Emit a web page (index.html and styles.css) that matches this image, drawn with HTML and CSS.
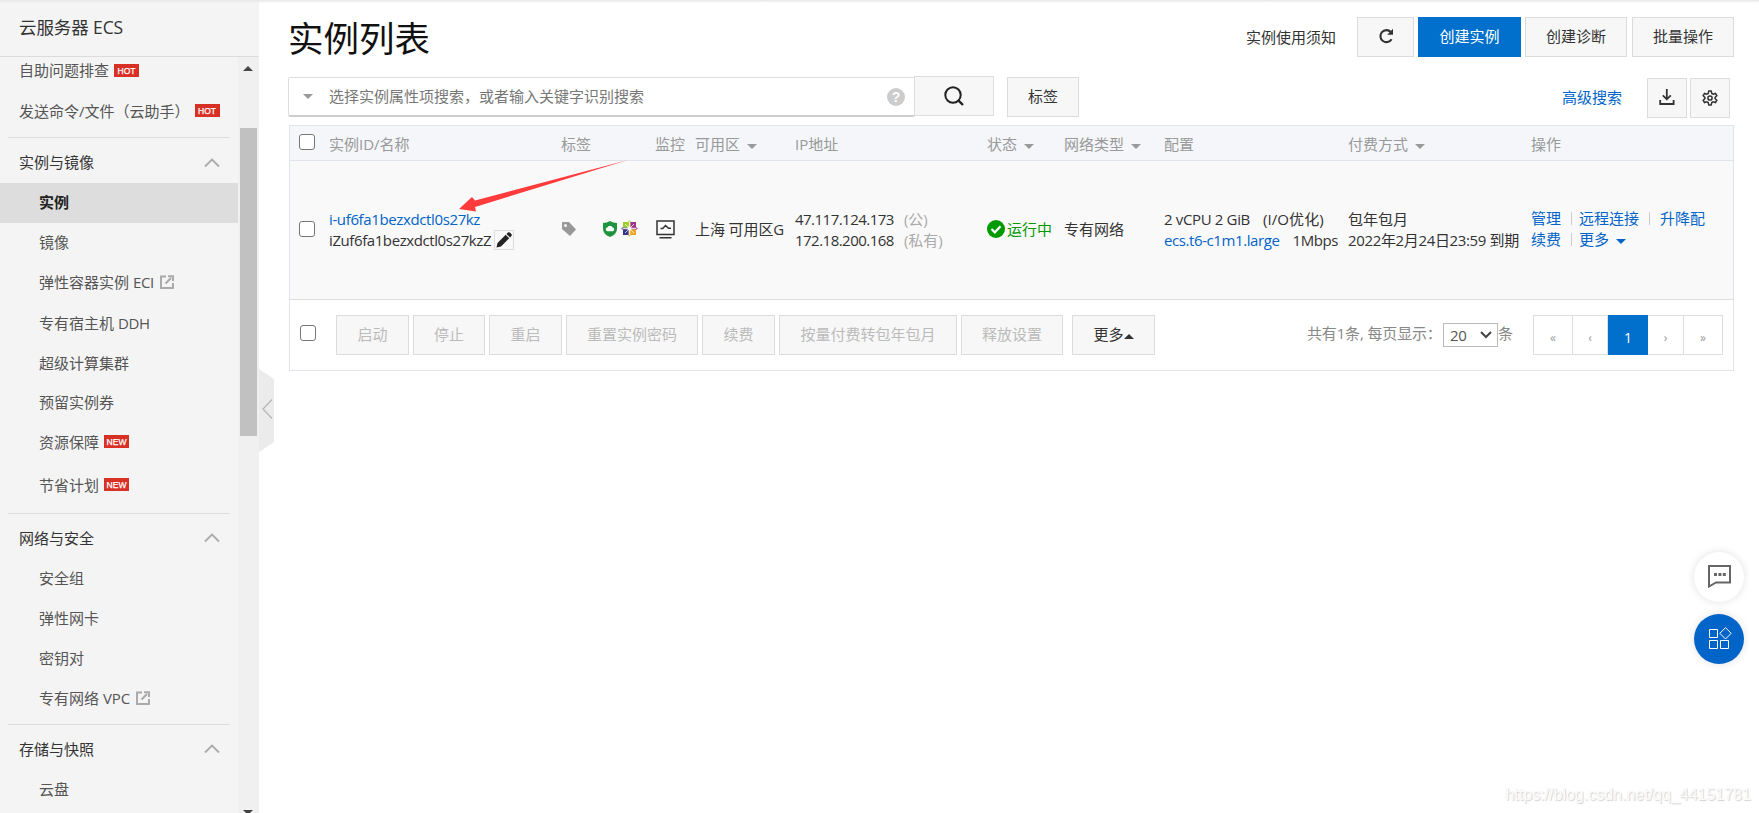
FILE: index.html
```html
<!DOCTYPE html>
<html lang="zh-CN">
<head>
<meta charset="utf-8">
<title>实例列表</title>
<link rel="stylesheet" href="styles.css">
</head>
<body>
<div class="app">
  <aside class="sidebar">
    <div class="product">云服务器 ECS</div>
    <div class="side-body">
      <nav class="nav">
        <a class="top first">自助问题排查<span class="badge">HOT</span></a>
        <a class="top second">发送命令/文件（云助手）<span class="badge wide">HOT</span></a>
        <hr class="rule">
        <div class="group tall">实例与镜像<svg class="chev" viewBox="0 0 16 10"><path d="M1 8.500l7-7 7 7"/></svg></div>
        <a class="item active">实例</a>
        <a class="item">镜像</a>
        <a class="item">弹性容器实例 <span class="latin">ECI</span><svg class="ext" viewBox="0 0 14 14"><path d="M6 1.500H1v11.500h12V8"/><path d="M5.500 8.500L11 3M8 1.200h5V6"/></svg></a>
        <a class="item level">专有宿主机 <span class="latin">DDH</span></a>
        <a class="item level">超级计算集群</a>
        <a class="item">预留实例券</a>
        <a class="item">资源保障<span class="badge">NEW</span></a>
        <a class="item level saving">节省计划<span class="badge">NEW</span></a>
        <hr class="rule">
        <div class="group">网络与安全<svg class="chev" viewBox="0 0 16 10"><path d="M1 8.500l7-7 7 7"/></svg></div>
        <a class="item level">安全组</a>
        <a class="item level">弹性网卡</a>
        <a class="item level">密钥对</a>
        <a class="item level last">专有网络 VPC<svg class="ext" viewBox="0 0 14 14"><path d="M6 1.500H1v11.500h12V8"/><path d="M5.500 8.500L11 3M8 1.200h5V6"/></svg></a>
        <hr class="rule">
        <div class="group">存储与快照<svg class="chev" viewBox="0 0 16 10"><path d="M1 8.500l7-7 7 7"/></svg></div>
        <a class="item level">云盘</a>
      </nav>
      <div class="scrollbar"><i class="up"></i><i class="thumb"></i><i class="down"></i></div>
    </div>
    <svg class="collapse" viewBox="0 0 15 83"><path class="tab" d="M0 0l15 10v63L0 83z"/><path class="arrow" d="M13 30.500l-9 9.500 9 9.500"/></svg>
  </aside>

  <main class="main">
    <header class="head">
      <h1>实例列表</h1>
      <div class="head-actions">
        <span class="notice">实例使用须知</span>
        <button class="btn refresh"><svg width="16" height="16" viewBox="0 0 16 16"><path d="M12.800 4A6 6 0 1 0 13.600 11.200" fill="none" stroke="#333" stroke-width="2.100"/><path d="M15 .8v6H9.200z" fill="#333"/></svg></button>
        <button class="btn primary">创建实例</button>
        <button class="btn diag">创建诊断</button>
        <button class="btn batch">批量操作</button>
      </div>
    </header>

    <div class="search">
      <div class="search-box"><i class="caret"></i><span class="placeholder">选择实例属性项搜索，或者输入关键字识别搜索</span><span class="help">?</span></div>
      <button class="btn go"><svg width="20" height="20" viewBox="0 0 20 20" fill="none" stroke="#222" stroke-width="2"><circle cx="9" cy="9" r="7.700"/><path d="M14.300 14.300l4.700 4.700" stroke-width="2.400"/></svg></button>
      <button class="btn tagbtn">标签</button>
      <a class="advanced">高级搜索</a>
      <button class="btn square"><svg width="16" height="16" viewBox="0 0 16 16" fill="none" stroke="#333" stroke-width="1.800"><path d="M7.800 0v10M3.800 6.300l4 4 4-4M1.200 11v4h13.400v-4"/></svg></button>
      <button class="btn square gear"><svg width="16" height="16" viewBox="0 0 16 16" fill="none" stroke="#333" stroke-width="1.500"><path d="M6.800 1h2.400l.6 2.400 1.400.8 2.300-.7 1.300 2.200L13.100 7.400v1.200l1.700 1.700-1.300 2.200-2.300-.7-1.400.8-.6 2.400H6.800l-.6-2.400-1.400-.8-2.300.7-1.300-2.200 1.700-1.700V7.400L1.200 5.700l1.300-2.200 2.300.7 1.400-.8z"/><circle cx="8" cy="8" r="2.100"/></svg></button>
    </div>

    <section class="table">
      <div class="row thead">
        <div><i class="check"></i></div><div>实例ID/名称</div><div>标签</div><div></div><div>监控</div>
        <div>可用区<i class="caret sort"></i></div><div>IP地址</div><div>状态<i class="caret sort"></i></div>
        <div>网络类型<i class="caret sort"></i></div><div>配置</div><div>付费方式<i class="caret sort"></i></div><div>操作</div>
      </div>
      <div class="row data">
        <div><i class="check"></i></div>
        <div class="lines name">
          <a class="link id">i-uf6fa1bezxdctl0s27kz</a>
          <div class="alias"><span>iZuf6fa1bezxdctl0s27kzZ</span><i class="edit"><svg width="16" height="16" viewBox="0 0 16 16" fill="#222"><path d="M.5 15.500l1-4.500L9.700 2.800l3.500 3.500L5 14.500zM10.500 2l1.400-1.400q1-.9 2 0l1.500 1.500q.9 1 0 2L14 5.500z"/></svg></i></div>
        </div>
        <div><svg width="16" height="16" viewBox="0 0 16 16"><path d="M1.500 1H8l7 7.500L9 15 1 8V1.500z" fill="#999"/><circle cx="4.500" cy="4.500" r="1.500" fill="#fafafa"/></svg></div>
        <div class="marks">
          <svg width="14" height="16" viewBox="0 0 14 16"><path d="M7 0q3 2 7 2v6q0 5-7 8-7-3-7-8V2q4 0 7-2z" fill="#1e9440"/><path d="M4.200 10.200a1.900 1.900 0 0 1 .1-3.700 2.900 2.900 0 0 1 5.400 0 1.900 1.900 0 0 1 .1 3.700z" fill="#fff"/></svg>
          <svg class="flower" width="17" height="17" viewBox="0 0 17 17"><path d="M8.500 0l3 3.500-3 4-3-4z" fill="#c5d96a"/><path d="M17 8.500l-3.500 3-4-3 4-3z" fill="#b070a0"/><path d="M8.500 17l-3-3.500 3-4 3 4z" fill="#f0c070"/><path d="M0 8.500l3.500-3 4 3-4 3z" fill="#8a7ab0"/><path d="M2 2h5.500v5.500H2z" fill="#9ccd2a"/><path d="M9.500 2H15v5.500H9.500z" fill="#a1358a"/><path d="M9.500 9.500H15V15H9.500z" fill="#efa724"/><path d="M2 9.500h5.500V15H2z" fill="#363587"/><path d="M4 4l9 9M13 4l-9 9M8.500 2v13M2 8.500h13" stroke="#fff" stroke-width=".7"/></svg>
        </div>
        <div class="monitor"><svg width="19" height="19" viewBox="0 0 19 19" fill="none" stroke="#333" stroke-width="1.500"><path d="M1 1h17v13.500H1zM3.500 17.700h12"/><path d="M4.500 8.500h2.200l2.800-3 3 2.800h2.500"/></svg></div>
        <div class="zone">上海 可用区G</div>
        <div class="lines ip"><div><span>47.117.124.173</span><em>(公)</em></div><div><span>172.18.200.168</span><em>(私有)</em></div></div>
        <div class="status"><svg width="18" height="18" viewBox="0 0 18 18"><circle cx="9" cy="9" r="9" fill="#090"/><path d="M4.500 9l3.300 3.300 5.700-6" fill="none" stroke="#fff" stroke-width="2.200"/></svg>运行中</div>
        <div>专有网络</div>
        <div class="lines config"><div><span class="cpu">2 vCPU 2 GiB</span><span class="io">(I/O优化)</span></div><div><a class="link spec">ecs.t6-c1m1.large</a><span class="bw">1Mbps</span></div></div>
        <div class="lines pay"><div>包年包月</div><div class="date">2022年2月24日23:59 到期</div></div>
        <div class="ops">
          <div><a class="link">管理</a><i class="bar"></i><a class="link">远程连接</a><i class="bar second-bar"></i><a class="link">升降配</a></div>
          <div><a class="link">续费</a><i class="bar"></i><a class="link">更多</a><i class="caret blue"></i></div>
        </div>
      </div>
      <footer class="foot">
        <i class="check"></i>
        <div class="bulk">
          <button class="btn off w73">启动</button><button class="btn off w72">停止</button><button class="btn off w73">重启</button><button class="btn off w132">重置实例密码</button><button class="btn off w73">续费</button><button class="btn off w178">按量付费转包年包月</button><button class="btn off w102">释放设置</button><button class="btn more">更多<i class="caret upward"></i></button>
        </div>
        <span class="total">共有1条, 每页显示：</span>
        <span class="select">20<svg width="12" height="8" viewBox="0 0 12 8"><path d="M1 1l5 5 5-5" fill="none" stroke="#444" stroke-width="2"/></svg></span>
        <span class="unit">条</span>
        <div class="pager"><a>«</a><a>‹</a><a class="current">1</a><a>›</a><a>»</a></div>
      </footer>
    </section>
  </main>
</div>

<svg class="pointer" viewBox="0 0 170 54"><path d="M170 1L17 41.500 14 38 1 50 18 52.500 17 48z"/></svg>

<div class="floats">
  <span class="bubble"><svg width="23" height="23" viewBox="0 0 23 23"><path d="M1 1h21v16.500H8L1 21.500z" fill="none" stroke="#666" stroke-width="2"/><path d="M6 8h3v3H6zM10.400 8h3v3h-3zM14.800 8h3v3h-3z" fill="#666"/></svg></span>
  <span class="bubble solid"><svg width="23" height="23" viewBox="0 0 23 23" fill="none" stroke="#fff" stroke-width="1"><path d="M.5 2.500h8v8h-8zM.5 13.500h8v8h-8zM11.500 13.500h8v8h-8zM16.500.7l5.700 5.600-5.700 5.700-5.700-5.700z"/></svg></span>
</div>
<div class="watermark">https://blog.csdn.net/qq_44151781</div>
</body>
</html>
```
FILE: styles.css
```css
* { box-sizing: border-box; }
body {
  margin: 0; height: 813px; overflow: hidden; position: relative; background: #fff; color: #333;
  font: 15px/21px "Open Sans", "Noto Sans CJK SC", sans-serif; font-weight: 400;
}
body::before { content: ""; position: absolute; z-index: 3; left: 0; right: 0; top: 0; height: 3px; background: linear-gradient(#e6e6e6, rgba(240,240,240,0)); }
i, em { font-style: normal; }
svg { display: block; flex: none; }
.app { display: flex; height: 813px; }

.sidebar { position: relative; width: 259px; flex: none; background: #f4f4f4; display: flex; flex-direction: column; }
.product { height: 57px; padding: 17px 0 0 19px; border-bottom: 1px solid #dcdcdc; font-size: 17.500px; letter-spacing: -.1px; color: #333; }
.side-body { display: flex; flex: 1; min-height: 0; }
.nav { width: 238px; overflow: hidden; color: #555; }
.top, .item, .group { display: flex; align-items: center; white-space: pre; }
.top { padding-left: 19px; }
.first { height: 28px; padding-bottom: 1px; }
.second { height: 52px; }
.item { height: 40px; padding: 0 0 2px 39px; }
.level { padding-bottom: 0; }
.latin { letter-spacing: -.3px; }
.active { background: #ddd; color: #222; font-weight: 700; }
.saving { height: 44px; margin-bottom: 6px; }
.last { margin-bottom: 6px; }
.rule { height: 1px; border: 0; margin: 0 8px; background: #dcdcdc; }
.group { height: 44px; padding: 4px 18px 0 19px; color: #333; justify-content: space-between; }
.tall { height: 45px; }
.chev { width: 16px; height: 10px; fill: none; stroke: #aaa; stroke-width: 1.800; }
.ext { width: 14px; height: 14px; margin: 0 0 1px 6px; fill: none; stroke: #aaa; stroke-width: 2; }
.badge { width: 25px; height: 13px; margin: 0 0 1px 5px; background: #d93026; color: #fff; font: 8.500px/14px "Liberation Sans", sans-serif; -webkit-text-stroke: .25px #fff; text-align: center; }
.badge.wide { margin-left: 5px; }
.scrollbar { width: 21px; background: #f0f0f0; display: flex; flex-direction: column; align-items: center; overflow: hidden; padding-right: 1px; }
.up { flex: none; border: 5px solid transparent; border-bottom-color: #444; border-top: 0; margin-top: 9px; }
.thumb { flex: none; width: 17px; height: 308px; margin-top: 57px; background: #c1c1c1; }
.down { flex: none; border: 5px solid transparent; border-top-color: #444; border-bottom: 0; margin-top: 374px; }
.collapse { position: absolute; left: 259px; top: 369px; width: 15px; height: 83px; }
.tab { fill: #ebebeb; }
.arrow { fill: none; stroke: #b5b5b5; stroke-width: 1.200; }

.main { flex: 1; padding: 0 25px 0 29px; }
.head { display: flex; justify-content: space-between; height: 76px; }
h1 { margin: 12px 0 0 0; font-size: 35.500px; line-height: 52px; font-weight: 400; color: #111; height: 52px; }
.head-actions { display: flex; padding-top: 17px; }
.notice { margin: 10px 21px 0 0; }
.btn { height: 40px; padding: 0 0 1px; border: 1px solid #dcdcdc; background: #f7f7f7; color: #333; font: inherit; display: flex; align-items: center; justify-content: center; white-space: nowrap; flex: none; }
.refresh { width: 57px; margin-right: 4px; padding-bottom: 3px; }
.primary { width: 103px; margin-right: 4px; background: #0070cc; border-color: #0070cc; color: #fff; }
.diag { width: 102px; margin-right: 5px; }
.batch { width: 102px; }

.search { display: flex; height: 49px; align-items: flex-start; }
.search-box { width: 627px; height: 40px; margin-top: 1px; border: 1px solid #dedede; border-bottom: 2px solid #ccc; border-radius: 2px; display: flex; align-items: center; padding: 0 9px 0 14px; color: #777; }
.caret { display: inline-block; border: 5px solid transparent; border-top-color: #999; border-bottom: 0; flex: none; }
.placeholder { margin-left: 16px; }
.help { margin-left: auto; width: 18px; height: 18px; border-radius: 9px; background: #ccc; color: #fff; text-align: center; font: bold 14px/18px "Liberation Sans", sans-serif; }
.go { width: 80px; margin-left: -1px; }
.tagbtn { width: 72px; margin: 1px 0 0 13px; }
.advanced { margin: 11px 25px 0 auto; color: #0064c8; }
.square { width: 40px; margin-top: 2px; padding-bottom: 2px; }
.gear { margin: 2px 4px 0 3px; padding-bottom: 1px; }

.table { width: 1445px; height: 246px; margin-left: 1px; border: 1px solid #dfe5eb; }
.row { display: grid; grid-template-columns: 39px 232px 42px 52px 40px 100px 192px 77px 100px 184px 183px 1fr; align-items: center; white-space: nowrap; }
.thead { height: 35px; background: #f4f6fa; border-bottom: 1px solid #dfe5eb; color: #999; padding-top: 3px; }
.check { display: block; width: 16px; height: 16px; margin-left: 9px; border: 1.500px solid #767676; border-radius: 3px; background: #fff; }
.thead .check { margin-top: -6px; }
.sort { margin: 0 0 -1px 7px; vertical-align: middle; }
.data { height: 139px; background: #f9f9f9; border-bottom: 1px solid #ddd; padding-bottom: 2px; }
.lines { line-height: 21px; padding-top: 2px; }
.link { color: #0064c8; }
.id { letter-spacing: -.37px; }
.alias { display: flex; letter-spacing: -.41px; height: 21px; }
.edit { width: 20px; height: 20px; border: 1px solid #ddd; margin-left: 3px; padding: 1px; }
.marks { display: flex; gap: 4px; }
.flower { margin-top: -1px; }
.monitor { padding-left: 1px; }
.zone { letter-spacing: -.1px; }
.ip span { letter-spacing: -.52px; }
.ip em { color: #aaa; margin-left: 10px; }
.status { display: flex; align-items: center; gap: 2px; color: #090; }
.io { margin-left: 13px; }
.bw { margin-left: 13px; }
.cpu, .date { letter-spacing: -.35px; }
.io { letter-spacing: .1px; }
.spec, .bw { letter-spacing: -.41px; }
.ops div { display: flex; align-items: center; height: 21px; }
.bar { width: 1px; height: 13px; background: #ccc; margin: 0 7px 0 10px; }
.second-bar { margin-right: 10px; }
.blue { border-top-color: #0064c8; margin: 4px 0 0 7px; }

.foot { display: flex; height: 70px; padding: 15px 10px 0 1px; align-items: flex-start; white-space: nowrap; }
.foot .check { margin-top: 10px; flex: none; }
.bulk { display: flex; gap: 4px; margin-left: 20px; }
.off { color: #bbb; }
.w72 { width: 72px; } .w73 { width: 73px; } .w102 { width: 102px; } .w132 { width: 132px; } .w178 { width: 178px; }
.more { width: 83px; margin-left: 5px; }
.upward { border: 5px solid transparent; border-top: 0; border-bottom-color: #333; margin-top: 4px; }
.total { margin: 8px 0 0 auto; width: 136px; color: #888; letter-spacing: -.15px; }
.select { width: 55px; height: 24px; margin-top: 8px; border: 1px solid #bbb; background: #fff; display: flex; align-items: center; justify-content: space-between; padding: 0 5px 0 6px; color: #555; letter-spacing: -.4px; }
.unit { margin-top: 8px; color: #888; }
.pager { display: grid; grid-template-columns: 39px 35px 40px 36px 38px; height: 40px; margin-left: 20px; border: 1px solid #ddd; width: 190px; font-size: 12px; color: #999; }
.pager a { display: flex; align-items: center; justify-content: center; padding-top: 4px; border-right: 1px solid #ddd; }
.pager a:last-child { border: 0; }
.pager .current { background: #0070cc; color: #fff; border: 0; margin: -1px 0; font-size: 14px; }

.pointer { position: absolute; left: 458px; top: 159px; width: 170px; height: 54px; fill: #ff3b3b; }
.floats { position: absolute; left: 1694px; top: 552px; display: grid; gap: 12px; }
.bubble { width: 50px; height: 50px; padding: 0 0 2px; border-radius: 50%; background: #fff; box-shadow: 0 0 8px rgba(0,0,0,.12); display: flex; align-items: center; justify-content: center; }
.solid { background: #0064c8; padding: 0 0 1px 2px; }
.watermark { position: absolute; right: 8px; top: 785px; font: 16px/20px "Liberation Sans", sans-serif; color: #fcfcfc; text-shadow: 1px 1px 1px #d2d2d2, 0 0 1px #e8e8e8; }
```
